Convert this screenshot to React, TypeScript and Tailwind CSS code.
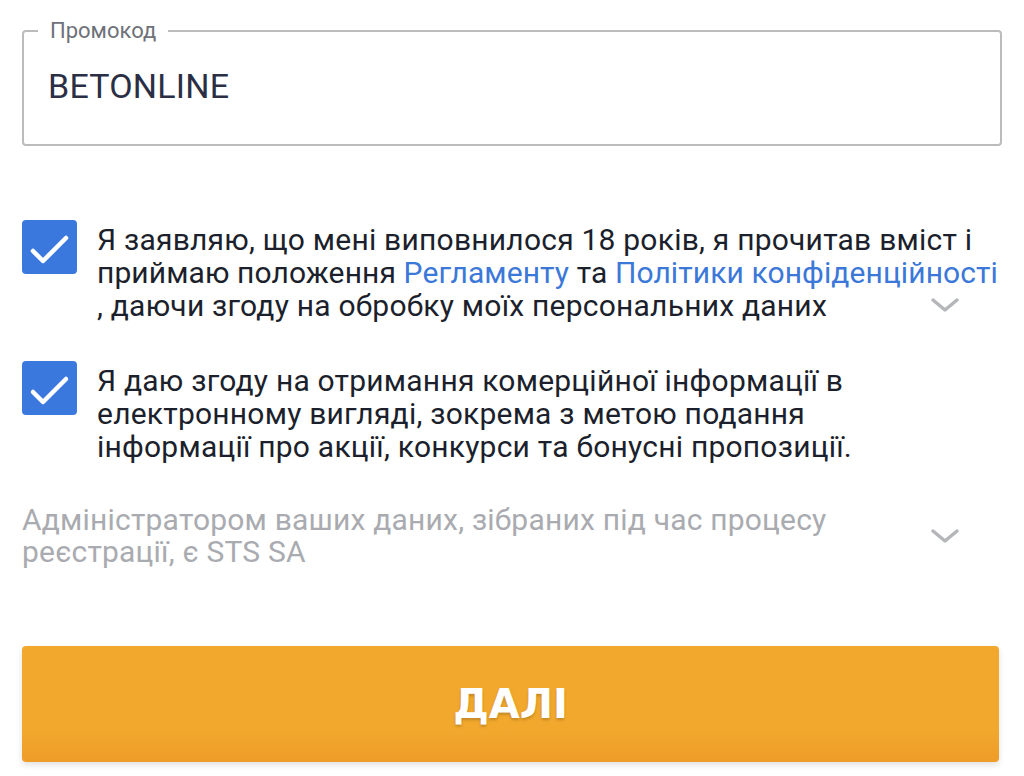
import React from "react";

function Check() {
  return (
    <div className="w-[55px] h-[54px] shrink-0 rounded-[4px] bg-[#3b78de] flex items-center justify-center">
      <svg width="55" height="54" viewBox="0 0 55 54">
        <polyline points="11,31 21,41 44,18" fill="none" stroke="#ffffff" strokeWidth="4.5" strokeLinecap="round" strokeLinejoin="round" />
      </svg>
    </div>
  );
}

function Chevron() {
  return (
    <svg width="30" height="16" viewBox="0 0 30 16">
      <polyline points="3,3 15,13 27,3" fill="none" stroke="#b4b6ba" strokeWidth="3.5" strokeLinecap="round" strokeLinejoin="round" />
    </svg>
  );
}

export default function App() {
  return (
    <div className="w-[1024px] h-[776px] bg-white overflow-hidden font-['Roboto',sans-serif]">
      <div className="px-[22px] pt-[17px]">
        <fieldset className="border-2 border-[#bcbcbc] rounded-[4px] h-[129px] pl-[14px] pr-4 m-0">
          <legend className="px-[12px] text-[22px] leading-[28px] text-[#6e717a]">Промокод</legend>
          <div className="ml-[10px] mt-[21px] text-[34px] leading-[40px] text-[#2b2f45] tracking-[0.2px]">BETONLINE</div>
        </fieldset>

        <div className="mt-[74px] relative flex gap-[20px] items-start">
          <Check />
          <p className="text-[30px] leading-[33px] text-[#1c1f2c] mt-[3px] whitespace-nowrap tracking-[0.22px]">
            Я заявляю, що мені виповнилося 18 років, я прочитав вміст і
            <br />
            <span className="tracking-[0.1px]">
              приймаю положення <span className="text-[#3b78d8]">Регламенту</span> та{" "}
              <span className="text-[#3b78d8]">Політики конфіденційності</span>
            </span>
            <br />, даючи згоду на обробку моїх персональних даних
          </p>
          <div className="absolute right-[42px] top-[77px]">
            <Chevron />
          </div>
        </div>

        <div className="mt-[39px] flex gap-[20px] items-start">
          <Check />
          <p className="text-[30px] leading-[33px] text-[#1c1f2c] mt-[3px] whitespace-nowrap tracking-[0.22px]">
            Я даю згоду на отримання комерційної інформації в
            <br />
            електронному вигляді, зокрема з метою подання
            <br />
            інформації про акції, конкурси та бонусні пропозиції.
          </p>
        </div>

        <div className="mt-[41px] flex items-center justify-between pr-[42px]">
          <p className="text-[30px] leading-[32px] text-[#a9abb0] whitespace-nowrap tracking-[0.2px]">
            Адміністратором ваших даних, зібраних під час процесу
            <br />
            реєстрації, є STS SA
          </p>
          <Chevron />
        </div>

        <button className="mt-[78px] w-[977px] h-[116px] rounded-[4px] bg-[linear-gradient(to_bottom,#f2a82d_0%,#f2a82d_70%,#ee9d28_100%)] shadow-[0_3px_6px_rgba(0,0,0,0.12)] flex items-center justify-center">
          <span className="font-['DejaVu_Sans',sans-serif] font-bold text-[40px] leading-none text-white [text-shadow:0_2px_3px_rgba(0,0,0,0.2)]">ДАЛІ</span>
        </button>
      </div>
    </div>
  );
}
